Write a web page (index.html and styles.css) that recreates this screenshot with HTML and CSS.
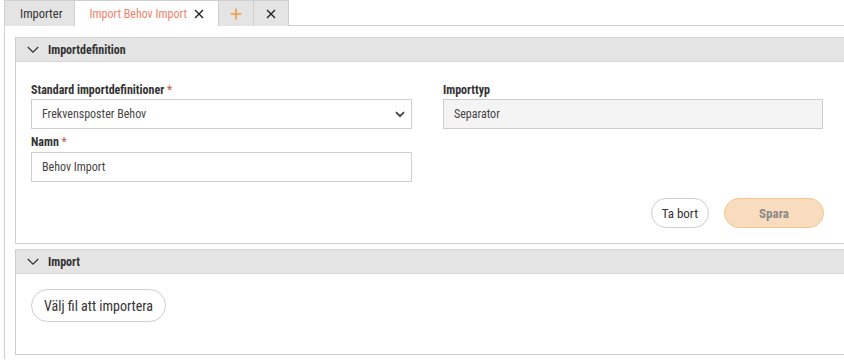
FILE: index.html
```html
<!DOCTYPE html>
<html lang="sv">
<head>
<meta charset="utf-8">
<title>Import</title>
<link rel="stylesheet" href="styles.css">
</head>
<body>
<div class="tabbar">
  <div class="tab">Importer</div>
  <div class="tab active">Import Behov Import
    <svg class="ico" viewBox="0 0 10 10" width="10" height="10"><path d="M1 1L9 9M9 1L1 9" stroke="#222" stroke-width="1.4" fill="none"/></svg>
  </div>
  <div class="tab icon-tab">
    <svg viewBox="0 0 12 12" width="12" height="12"><path d="M6 0.5V11.5M0.5 6H11.5" stroke="#f59a3e" stroke-width="1.6" fill="none"/></svg>
  </div>
  <div class="tab icon-tab">
    <svg viewBox="0 0 10 10" width="10" height="10"><path d="M1 1L9 9M9 1L1 9" stroke="#222" stroke-width="1.4" fill="none"/></svg>
  </div>
  <div class="tab-rest"></div>
</div>
<div class="panel">
  <section class="card">
    <div class="card-head">
      <svg class="chev" viewBox="0 0 12 8" width="12" height="8"><path d="M0.8 1L6 6.2L11.2 1" stroke="#333" stroke-width="1.3" fill="none"/></svg>
      <span>Importdefinition</span>
    </div>
    <div class="card-body def-body">
      <div class="grid">
        <div class="col">
          <label class="lbl">Standard importdefinitioner <span class="req">*</span></label>
          <div class="field select">
            <span>Frekvensposter Behov</span>
            <svg viewBox="0 0 10 7" width="10" height="7"><path d="M1 1.2L5 5.2L9 1.2" stroke="#444" stroke-width="1.8" fill="none"/></svg>
          </div>
          <label class="lbl lbl2">Namn <span class="req">*</span></label>
          <div class="field">Behov Import</div>
        </div>
        <div class="col">
          <label class="lbl">Importtyp</label>
          <div class="field readonly">Separator</div>
        </div>
      </div>
      <div class="actions">
        <button class="btn">Ta bort</button>
        <button class="btn primary">Spara</button>
      </div>
    </div>
  </section>
  <section class="card">
    <div class="card-head">
      <svg class="chev" viewBox="0 0 12 8" width="12" height="8"><path d="M0.8 1L6 6.2L11.2 1" stroke="#333" stroke-width="1.3" fill="none"/></svg>
      <span>Import</span>
    </div>
    <div class="card-body imp-body">
      <button class="btn file">Välj fil att importera</button>
    </div>
  </section>
</div>
</body>
</html>
```
FILE: styles.css
```css
html, body {
  margin: 0;
  padding: 0;
  background: #fff;
  overflow: hidden;
}
body {
  width: 880px;
  font-family: "Roboto Condensed", Roboto, "Liberation Sans Narrow", sans-serif;
  font-stretch: 75%;
  font-size: 12px;
  color: #333;
}
.tabbar {
  display: flex;
  height: 26px;
  padding-left: 4px;
  box-sizing: border-box;
}
.tab {
  display: flex;
  align-items: center;
  gap: 7px;
  height: 26px;
  box-sizing: border-box;
  padding: 0 12px 0 15px;
  background: #e4e4e4;
  border: 1px solid #cfcfcf;
  border-bottom: none;
  color: #333;
  font-size: 12.5px;
}
.tab + .tab {
  border-left: none;
}
.tab.active {
  background: #fff;
  color: #f0826a;
  font-size: 12px;
  padding: 0 14px 0 14px;
}
.icon-tab {
  justify-content: center;
  width: 35px;
  padding: 0;
}
.tab-rest {
  flex: 1;
  border-bottom: 1px solid #cfcfcf;
}
.panel {
  margin-left: 4px;
  border-left: 1px solid #cfcfcf;
  padding: 11px 10px 4px 10px;
  display: flex;
  flex-direction: column;
  gap: 5px;
}
.card {
  border: 1px solid #cfcfcf;
  border-top: none;
  margin-right: -40px;
}
.card-head {
  display: flex;
  align-items: center;
  gap: 9px;
  height: 25px;
  box-sizing: border-box;
  padding-left: 11px;
  background: #e4e4e4;
  border-top: 1px solid #d4d4d4;
  border-bottom: 1px solid #d8d8d8;
  font-weight: 700;
  font-size: 12px;
  color: #333;
}
.card-body {
  padding: 20px 15px 15px 15px;
}
.grid {
  display: grid;
  grid-template-columns: 381px 380px;
  column-gap: 31px;
}
.col {
  display: flex;
  flex-direction: column;
}
.lbl {
  font-weight: 700;
  line-height: 16px;
  height: 16px;
  margin-bottom: 1px;
  color: #333;
}
.lbl2 {
  margin-top: 5px;
  margin-bottom: 2px;
}
.req {
  color: #c9574a;
  font-weight: 400;
}
.field {
  height: 30px;
  box-sizing: border-box;
  border: 1px solid #cfcfcf;
  display: flex;
  align-items: center;
  padding: 0 10px;
  color: #444;
}
.select {
  justify-content: space-between;
  padding-right: 6px;
}
.readonly {
  background: #f4f4f4;
  border: 1px solid #cdcdcd;
}
.actions {
  display: flex;
  justify-content: flex-end;
  gap: 15px;
  margin-top: 16px;
  width: 793px;
}
.btn {
  font-family: inherit;
  font-stretch: inherit;
  font-size: 13px;
  height: 30px;
  border-radius: 15px;
  border: 1px solid #cfcfcf;
  background: #fff;
  color: #333;
  padding: 0 10px;
}
.btn.primary {
  width: 100px;
  background: #f9dcbd;
  border-color: #f2c594;
  color: #8a8a8a;
  font-weight: 700;
}
.imp-body {
  padding: 15px 15px 32px 15px;
}
.btn.file {
  height: 33px;
  border-radius: 17px;
  padding: 0 12px;
  font-size: 14px;
}
```
